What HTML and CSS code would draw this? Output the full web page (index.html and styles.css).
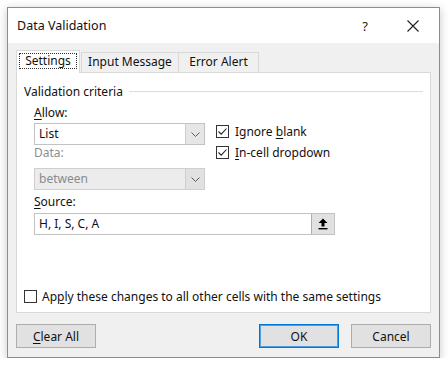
FILE: index.html
```html
<!DOCTYPE html>
<html>
<head>
    <meta charset="UTF-8">
    <title>Data Validation</title>
    <link rel="stylesheet" href="styles.css">
</head>
<body>
<div class="dialog">
    <div class="titlebar">
        <span class="title">Data Validation</span>
        <span class="help">?</span>
        <span class="close">
            <svg width="12" height="12" viewBox="0 0 12 12"><path d="M0.5 0.5 L11.5 11.5 M11.5 0.5 L0.5 11.5" stroke="#1e1e1e" stroke-width="1.1" fill="none"/></svg>
        </span>
    </div>
    <div class="content">
        <div class="tabs">
            <div class="tab active"><span class="focus">Settings</span></div>
            <div class="tab tab-input">Input Message</div>
            <div class="tab tab-error">Error Alert</div>
        </div>
        <div class="panel">
            <div class="group-title">
                <span>Validation criteria</span>
                <div class="rule"></div>
            </div>
            <div class="criteria">
                <div class="left">
                    <label class="field"><u>A</u>llow:</label>
                    <div class="combo">
                        <span class="value">List</span>
                        <span class="drop">
                            <svg width="9" height="5" viewBox="0 0 9 5"><path d="M0.5 0.5 L4.5 4.5 L8.5 0.5" stroke="#5a5a5a" fill="none"/></svg>
                        </span>
                    </div>
                    <label class="field disabled">Data:</label>
                    <div class="combo disabled">
                        <span class="value">between</span>
                        <span class="drop">
                            <svg width="9" height="5" viewBox="0 0 9 5"><path d="M0.5 0.5 L4.5 4.5 L8.5 0.5" stroke="#5a5a5a" fill="none"/></svg>
                        </span>
                    </div>
                </div>
                <div class="right">
                    <div class="check-row">
                        <span class="box checked">
                            <svg width="11" height="11" viewBox="0 0 11 11"><path d="M1.5 5.5 L4.2 8.2 L9.5 2.5" stroke="#222" stroke-width="1.1" fill="none"/></svg>
                        </span>
                        <span>Ignore <u>b</u>lank</span>
                    </div>
                    <div class="check-row">
                        <span class="box checked">
                            <svg width="11" height="11" viewBox="0 0 11 11"><path d="M1.5 5.5 L4.2 8.2 L9.5 2.5" stroke="#222" stroke-width="1.1" fill="none"/></svg>
                        </span>
                        <span><u>I</u>n-cell dropdown</span>
                    </div>
                </div>
            </div>
            <label class="field source-label"><u>S</u>ource:</label>
            <div class="source">
                <span class="value">H, I, S, C, A</span>
                <span class="pick">
                    <svg width="10" height="12" viewBox="0 0 10 12"><path d="M5 0.5 L9.5 5 L6.5 5 L6.5 8.5 L3.5 8.5 L3.5 5 L0.5 5 Z" fill="#000"/><rect x="0.5" y="10" width="9" height="1.4" fill="#000"/></svg>
                </span>
            </div>
            <div class="check-row apply">
                <span class="box"></span>
                <span>Ap<u>p</u>ly these changes to all other cells with the same settings</span>
            </div>
        </div>
        <div class="buttons">
            <button class="btn clear"><u>C</u>lear All</button>
            <button class="btn ok">OK</button>
            <button class="btn">Cancel</button>
        </div>
    </div>
</div>
</body>
</html>
```

FILE: styles.css
```css
body {
    margin: 0;
    padding: 0;
    background-color: #fff;
    font-family: "Noto Sans", sans-serif;
    font-size: 12px;
    color: #111;
}

u {
    text-decoration: underline;
    text-underline-offset: 2px;
}

.dialog {
    margin: 7px 0 0 7px;
    width: 433px;
    height: 351px;
    box-sizing: border-box;
    border: 1px solid #8c8c8c;
    background-color: #f0f0f0;
    box-shadow: 0 2px 9px rgba(0, 0, 0, 0.22);
    display: flex;
    flex-direction: column;
}

.titlebar {
    height: 35px;
    background-color: #fff;
    display: flex;
    align-items: center;
    padding-left: 9px;
    font-size: 12.5px;
}

.title {
    flex: 1;
}

.help {
    width: 44px;
    text-align: center;
    font-size: 13px;
    color: #222;
}

.close {
    width: 52px;
    display: flex;
    justify-content: center;
    align-items: center;
}

.content {
    flex: 1;
    padding: 7px 8px 0 8px;
    display: flex;
    flex-direction: column;
}

.tabs {
    display: flex;
    align-items: flex-end;
    height: 23px;
    margin-bottom: -1px;
}

.tab {
    height: 21px;
    box-sizing: border-box;
    border: 1px solid #d9d9d9;
    border-bottom: none;
    background-color: #f0f0f0;
    line-height: 16px;
    padding-top: 1px;
    text-align: center;
}

.tab.active {
    width: 64px;
    height: 23px;
    background-color: #fff;
    padding: 2px 2px 0 2px;
    position: relative;
    z-index: 1;
}

.focus {
    display: block;
    height: 16px;
    line-height: 14px;
    box-sizing: border-box;
    border: 1px dotted #333;
}

.tab-input {
    width: 98px;
    margin-left: 1px;
}

.tab-error {
    width: 80px;
    border-left: none;
}

.panel {
    height: 241px;
    box-sizing: border-box;
    background-color: #fff;
    border: 1px solid #d9d9d9;
    padding: 10px 7px 8px 7px;
    display: flex;
    flex-direction: column;
}

.group-title {
    height: 16px;
    display: flex;
    align-items: center;
}

.rule {
    flex: 1;
    height: 1px;
    margin-left: 6px;
    background-color: #dcdcdc;
}

.criteria {
    display: flex;
    margin: 6px 0 0 10px;
}

.left {
    width: 171px;
}

.field {
    display: block;
    height: 16px;
    line-height: 16px;
}

.field.disabled {
    color: #8d8d8d;
}

.left .field:first-child {
    margin-bottom: 2px;
}

.combo {
    height: 22px;
    box-sizing: border-box;
    border: 1px solid #c2c2c2;
    display: flex;
    align-items: stretch;
}

.combo .value {
    flex: 1;
    padding-left: 4px;
    line-height: 20px;
}

.combo .drop {
    width: 18px;
    background-color: #e6e6e6;
    border-left: 1px solid #cdcdcd;
    display: flex;
    align-items: center;
    justify-content: center;
}

.combo.disabled {
    background-color: #ececec;
    border-color: #cfcfcf;
    color: #8a8a8a;
    margin-top: 7px;
}

.combo.disabled .drop {
    background-color: #e1e1e1;
}

.right {
    margin-left: 11px;
    padding-top: 16px;
}

.check-row {
    height: 21px;
    display: flex;
    align-items: center;
}

.box {
    width: 13px;
    height: 13px;
    box-sizing: border-box;
    border: 1px solid #333;
    background-color: #fff;
    margin-right: 6px;
    display: flex;
    align-items: center;
    justify-content: center;
}

.source-label {
    margin: 4px 0 3px 10px;
}

.source {
    width: 301px;
    height: 22px;
    box-sizing: border-box;
    margin-left: 10px;
    border: 1px solid #c2c2c2;
    display: flex;
}

.source .value {
    flex: 1;
    padding-left: 4px;
    line-height: 20px;
}

.source .pick {
    width: 22px;
    background-color: #e1e1e1;
    border-left: 1px solid #adadad;
    display: flex;
    align-items: center;
    justify-content: center;
}

.check-row.apply {
    margin-top: auto;
    height: 16px;
}

.apply .box {
    margin-right: 5px;
}

.buttons {
    display: flex;
    margin-top: 11px;
}

.btn {
    height: 24px;
    width: 80px;
    box-sizing: border-box;
    background-color: #e1e1e1;
    border: 1px solid #adadad;
    font-family: "Noto Sans", sans-serif;
    font-size: 12px;
    color: #111;
    padding: 0;
}

.btn.clear {
    margin-right: auto;
}

.btn.ok {
    border: 1px solid #0078d7;
    box-shadow: inset 0 0 0 1px #4c9ee3;
    margin-right: 12px;
}
```
